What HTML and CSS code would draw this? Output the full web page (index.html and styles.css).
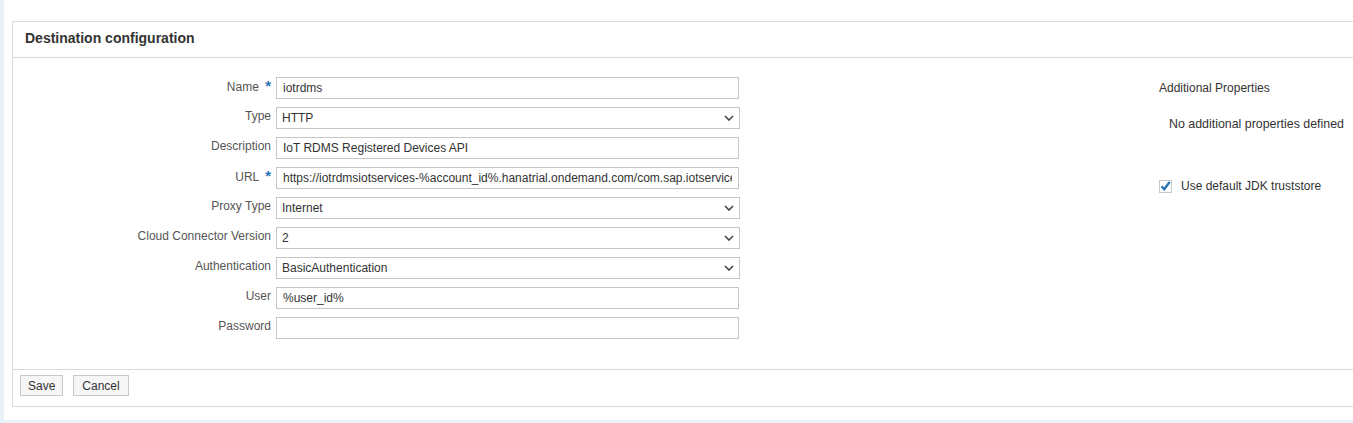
FILE: index.html
```html
<!DOCTYPE html>
<html>
<head>
<meta charset="utf-8">
<link rel="stylesheet" href="styles.css">
</head>
<body>
<div class="page">
  <div class="panel">
    <div class="panel-head">Destination configuration</div>
    <div class="panel-body">
      <div class="form">
        <div class="row">
          <label class="lbl">Name <span class="req">*</span></label>
          <input class="field" type="text" value="iotrdms">
        </div>
        <div class="row">
          <label class="lbl">Type</label>
          <div class="sel">
            <select class="field"><option>HTTP</option></select>
            <svg class="chev" width="10" height="6" viewBox="0 0 10 6"><path d="M1 1l4 4 4-4" fill="none" stroke="#444" stroke-width="1.6"/></svg>
          </div>
        </div>
        <div class="row">
          <label class="lbl">Description</label>
          <input class="field" type="text" value="IoT RDMS Registered Devices API">
        </div>
        <div class="row">
          <label class="lbl">URL <span class="req">*</span></label>
          <input class="field" type="text" value="https://iotrdmsiotservices-%account_id%.hanatrial.ondemand.com/com.sap.iotservices.dms/api/">
        </div>
        <div class="row">
          <label class="lbl">Proxy Type</label>
          <div class="sel">
            <select class="field"><option>Internet</option></select>
            <svg class="chev" width="10" height="6" viewBox="0 0 10 6"><path d="M1 1l4 4 4-4" fill="none" stroke="#444" stroke-width="1.6"/></svg>
          </div>
        </div>
        <div class="row">
          <label class="lbl">Cloud Connector Version</label>
          <div class="sel">
            <select class="field"><option>2</option></select>
            <svg class="chev" width="10" height="6" viewBox="0 0 10 6"><path d="M1 1l4 4 4-4" fill="none" stroke="#444" stroke-width="1.6"/></svg>
          </div>
        </div>
        <div class="row">
          <label class="lbl">Authentication</label>
          <div class="sel">
            <select class="field"><option>BasicAuthentication</option></select>
            <svg class="chev" width="10" height="6" viewBox="0 0 10 6"><path d="M1 1l4 4 4-4" fill="none" stroke="#444" stroke-width="1.6"/></svg>
          </div>
        </div>
        <div class="row">
          <label class="lbl">User</label>
          <input class="field" type="text" value="%user_id%">
        </div>
        <div class="row">
          <label class="lbl">Password</label>
          <input class="field" type="password" value="">
        </div>
      </div>
      <div class="side">
        <div class="side-title">Additional Properties</div>
        <div class="side-empty">No additional properties defined</div>
        <div class="check-row">
          <span class="check">
            <svg width="11" height="10" viewBox="0 0 11 10"><path d="M1.5 5.2l2.8 3L9.6 1" fill="none" stroke="#2b73b3" stroke-width="2.4"/></svg>
          </span>
          <span class="check-label">Use default JDK truststore</span>
        </div>
      </div>
    </div>
    <div class="panel-foot">
      <button class="btn">Save</button>
      <button class="btn">Cancel</button>
    </div>
  </div>
</div>
</body>
</html>
```
FILE: styles.css
```css
html, body {
  margin: 0;
  padding: 0;
}
body {
  background: #e8f1f7;
  font-family: "Liberation Sans", Arial, sans-serif;
  font-size: 12px;
  color: #333;
  overflow: hidden;
  width: 1353px;
  height: 423px;
}
.page {
  margin-left: 4px;
  height: 420px;
  background: #fff;
  padding: 21px 0 0 8px;
  box-sizing: border-box;
  overflow: hidden;
}
.panel {
  border: 1px solid #d9d9d9;
  width: 1400px;
  background: #fff;
}
.panel-head {
  height: 35px;
  line-height: 33px;
  padding-left: 12px;
  font-weight: bold;
  font-size: 14px;
  color: #333;
  border-bottom: 1px solid #d9d9d9;
}
.panel-body {
  display: flex;
  padding: 19px 0 30px 0;
  border-bottom: 1px solid #d9d9d9;
}
.form {
  display: flex;
  flex-direction: column;
  gap: 8px;
  width: 726px;
  flex: none;
}
.row {
  display: flex;
  height: 22px;
}
.lbl {
  width: 258px;
  flex: none;
  margin-right: 5px;
  text-align: right;
  color: #555;
  line-height: 16px;
  padding-top: 1px;
  white-space: nowrap;
}
.req {
  color: #2b73b3;
  font-weight: bold;
  font-size: 15px;
  margin-left: 3px;
}
.field {
  width: 464px;
  height: 22px;
  box-sizing: border-box;
  border: 1px solid #c6c6c6;
  padding: 0 6px;
  font-family: "Liberation Sans", Arial, sans-serif;
  font-size: 12px;
  color: #333;
  background: #fff;
  outline: none;
  margin: 0;
}
select.field {
  -webkit-appearance: none;
  appearance: none;
  padding-left: 5px;
}
.sel {
  position: relative;
  width: 464px;
  height: 22px;
}
.chev {
  position: absolute;
  right: 6px;
  top: 8px;
}
.side {
  margin-left: 420px;
  padding-top: 3px;
}
.side-title {
  line-height: 16px;
  color: #333;
}
.side-empty {
  margin-top: 20px;
  padding-left: 10px;
  line-height: 16px;
  color: #333;
  font-size: 12.4px;
}
.check-row {
  display: flex;
  align-items: center;
  margin-top: 47px;
}
.check {
  width: 13px;
  height: 13px;
  border: 1px solid #c8c8c8;
  box-sizing: border-box;
  display: flex;
  align-items: center;
  justify-content: center;
  background: #fff;
}
.check-label {
  margin-left: 9px;
  color: #333;
}
.panel-foot {
  padding: 5px 0 10px 7px;
  display: flex;
  gap: 10px;
}
.btn {
  height: 21px;
  padding: 0 7px;
  border: 1px solid #c8c8c8;
  background: #f6f6f6;
  font-family: "Liberation Sans", Arial, sans-serif;
  font-size: 12px;
  color: #333;
  margin: 0;
}
.btn + .btn {
  padding: 0 8px;
}
```
